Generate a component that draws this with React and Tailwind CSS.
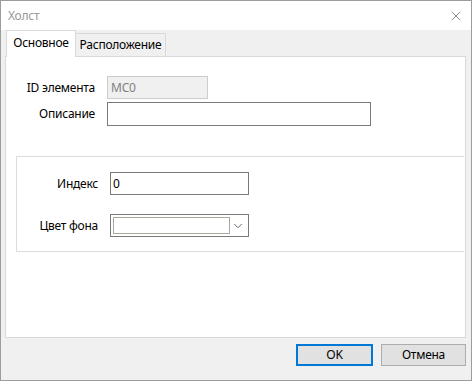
import { ChevronDown, X } from "lucide-react";

const font = { fontFamily: "'Noto Sans', 'Liberation Sans', sans-serif" };

function Field({ label, children, labelWidth }) {
  return (
    <div className="flex items-center">
      <span className={`${labelWidth} pr-[12px] text-right text-[12px] text-[#000]`}>{label}</span>
      {children}
    </div>
  );
}

export default function App() {
  return (
    <div
      className="flex h-[381px] w-[472px] flex-col border border-[#9c9c9c] bg-[#f0f0f0] text-[12px] leading-none tracking-[-0.25px]"
      style={font}
    >
      <div className="flex h-[29px] shrink-0 items-center justify-between bg-white pl-[7px] pr-[7px]">
        <span className="text-[12px] text-[#9a9a9a]">Холст</span>
        <X className="size-[16px] text-[#555]" strokeWidth={1} />
      </div>

      <div className="flex h-[26px] shrink-0 items-end pl-[5px]">
        <div className="relative z-10 mb-[-1px] flex h-[27px] w-[70px] items-center justify-center border border-b-0 border-[#d9d9d9] bg-white pb-[2px]">
          Основное
        </div>
        <div className="mb-[-1px] flex h-[24px] w-[90px] items-center justify-center border border-l-0 border-[#d9d9d9] bg-[#f0f0f0]">
          Расположение
        </div>
      </div>

      <div className="ml-[4px] mr-[5px] h-[282px] shrink-0 border border-[#d9d9d9] bg-white">
        <div className="flex flex-col gap-[3px] pt-[19px]">
          <Field label="ID элемента" labelWidth="w-[101px]">
            <div className="flex h-[23px] w-[101px] items-center border border-[#cccccc] bg-[#f0f0f0] px-[3px] text-[#808080]">
              MC0
            </div>
          </Field>
          <Field label="Описание" labelWidth="w-[101px]">
            <div className="h-[24px] w-[264px] border border-[#7a7a7a] bg-white" />
          </Field>
        </div>

        <div className="ml-[10px] mr-[1px] mt-[30px] h-[96px] border border-r-0 border-[#dcdcdc] pt-[15px]">
          <div className="flex flex-col gap-[19px]">
            <Field label="Индекс" labelWidth="w-[93px]">
              <div className="flex h-[23px] w-[139px] items-center border border-[#7a7a7a] bg-white px-[2px]">0</div>
            </Field>
            <Field label="Цвет фона" labelWidth="w-[93px]">
              <div className="flex h-[23px] w-[139px] items-center border border-[#7a7a7a] bg-white pl-[2px] pr-[3px]">
                <div className="h-[17px] w-[117px] border border-[#a8a89c] bg-white" />
                <ChevronDown className="ml-auto size-[14px] text-[#333]" strokeWidth={1.25} />
              </div>
            </Field>
          </div>
        </div>
      </div>

      <div className="mr-[5px] mt-[6px] flex justify-end gap-[8px]">
        <button className="flex h-[22px] w-[77px] items-center justify-center border-2 border-[#0078d7] bg-[#e1e1e1] text-[12px]">
          OK
        </button>
        <button className="flex h-[22px] w-[85px] items-center justify-center border border-[#adadad] bg-[#e1e1e1] text-[12px]">
          Отмена
        </button>
      </div>
    </div>
  );
}
